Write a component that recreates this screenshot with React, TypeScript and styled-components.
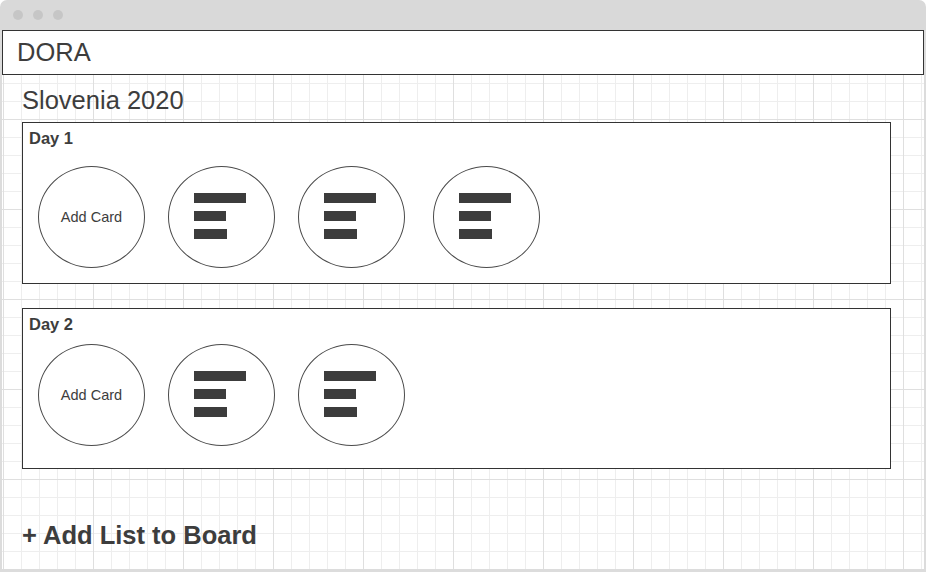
import React from "react";
import styled, { createGlobalStyle } from "styled-components";

const GlobalStyle = createGlobalStyle`
  html, body {
    margin: 0;
    padding: 0;
    background: #fff;
  }

  body {
    font-family: "Liberation Sans", Arial, sans-serif;
    color: #3d3d3d;
  }
`;

const Window = styled.div`
  width: 926px;
  height: 572px;
  display: flex;
  flex-direction: column;
  box-sizing: border-box;
`;

const TitleBar = styled.div`
  height: 30px;
  flex-shrink: 0;
  display: flex;
  align-items: center;
  gap: 10px;
  padding-left: 13px;
  box-sizing: border-box;
  background: #d9d9d9;
  border-radius: 7px 7px 0 0;
`;

const Dot = styled.span`
  width: 10px;
  height: 10px;
  border-radius: 50%;
  background: #c6c6c6;
`;

const Frame = styled.div`
  flex: 1;
  display: flex;
  flex-direction: column;
  border: 2px solid #dcdcdc;
  border-top: none;
  border-bottom-width: 3px;
  min-height: 0;
`;

const Header = styled.header`
  height: 45px;
  flex-shrink: 0;
  display: flex;
  align-items: center;
  padding-left: 14px;
  box-sizing: border-box;
  border: 1px solid #333;
  background: #fff;
  font-size: 25.5px;
  color: #3d3d3d;
`;

const Board = styled.main`
  flex: 1;
  display: flex;
  flex-direction: column;
  align-items: flex-start;
  padding: 13px 0 0 20px;
  background-color: #fff;
  background-image:
    linear-gradient(to right, #dfdfdf 1px, transparent 1px),
    linear-gradient(to bottom, #dfdfdf 1px, transparent 1px),
    linear-gradient(to right, #eeeeee 1px, transparent 1px),
    linear-gradient(to bottom, #eeeeee 1px, transparent 1px);
  background-size: 90px 90px, 90px 90px, 18px 18px, 18px 18px;
  background-position: 1px 0, 0 44px, 1px 0, 0 8px;
`;

const BoardTitle = styled.h1`
  margin: 0 0 9px;
  font-size: 25.5px;
  font-weight: 400;
  line-height: 25px;
  color: #3d3d3d;
`;

const List = styled.section<{ $gap: number; $bottom: number }>`
  width: 869px;
  box-sizing: border-box;
  display: flex;
  flex-direction: column;
  gap: ${(p) => p.$gap}px;
  padding: 7px 0 ${(p) => p.$bottom}px;
  margin-bottom: 24px;
  border: 1px solid #333;
  background: #fff;
`;

const ListTitle = styled.h2`
  margin: 0;
  padding-left: 6px;
  font-size: 16.5px;
  font-weight: 700;
  line-height: 16px;
  color: #3d3d3d;
`;

const CardRow = styled.div`
  display: flex;
  gap: 23px;
  padding-left: 15px;
`;

const Card = styled.div<{ $nudge?: number }>`
  width: 107px;
  height: 102px;
  box-sizing: border-box;
  border: 1px solid #4a4a4a;
  border-radius: 50%;
  background: #fff;
  display: flex;
  flex-direction: column;
  justify-content: center;
  gap: 8px;
  padding: 0 0 2px 25px;
  margin-left: ${(p) => p.$nudge ?? 0}px;
`;

const AddCard = styled(Card)`
  align-items: center;
  padding: 0;
  font-size: 14.5px;
  line-height: 16px;
  color: #3d3d3d;
  cursor: pointer;
`;

const Bar = styled.span<{ $w: number }>`
  display: block;
  width: ${(p) => p.$w}px;
  height: 10px;
  background: #3c3c3c;
`;

const AddList = styled.button`
  margin-top: 30px;
  padding: 0;
  border: none;
  background: transparent;
  font-family: "Liberation Sans", Arial, sans-serif;
  font-size: 25.5px;
  font-weight: 700;
  line-height: 25px;
  color: #3d3d3d;
  cursor: pointer;
`;

type ListData = {
  title: string;
  cards: number;
  gap: number;
  bottom: number;
};

const lists: ListData[] = [
  { title: "Day 1", cards: 3, gap: 20, bottom: 15 },
  { title: "Day 2", cards: 2, gap: 12, bottom: 22 },
];

function CardPreview({ nudge }: { nudge?: number }) {
  return (
    <Card $nudge={nudge}>
      <Bar $w={52} />
      <Bar $w={32} />
      <Bar $w={33} />
    </Card>
  );
}

export default function App() {
  return (
    <>
      <GlobalStyle />
      <Window>
        <TitleBar>
          <Dot />
          <Dot />
          <Dot />
        </TitleBar>
        <Frame>
          <Header>DORA</Header>
          <Board>
            <BoardTitle>Slovenia 2020</BoardTitle>
            {lists.map((list) => (
              <List key={list.title} $gap={list.gap} $bottom={list.bottom}>
                <ListTitle>{list.title}</ListTitle>
                <CardRow>
                  <AddCard>Add Card</AddCard>
                  {Array.from({ length: list.cards }).map((_, i) => (
                    <CardPreview key={i} nudge={i === 2 ? 5 : 0} />
                  ))}
                </CardRow>
              </List>
            ))}
            <AddList>+ Add List to Board</AddList>
          </Board>
        </Frame>
      </Window>
    </>
  );
}
